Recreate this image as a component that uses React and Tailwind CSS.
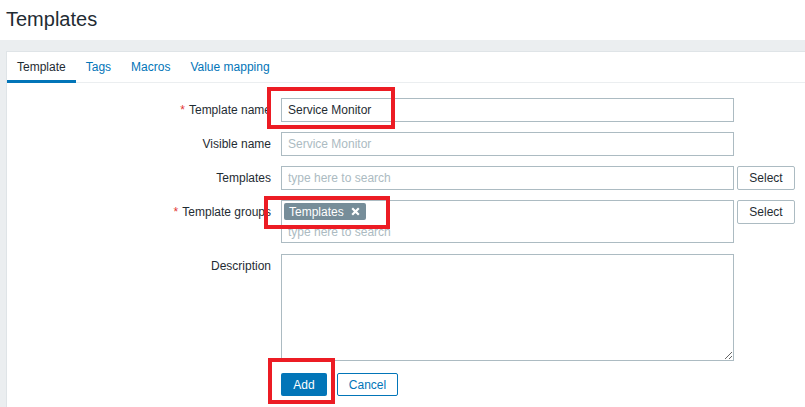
import React from 'react';

const labelCls = "w-[264px] shrink-0 text-right leading-[24px] text-[12px] text-[#1f2c33]";
const inputCls = "w-[453px] h-[24px] border border-[#acbbc2] bg-white px-[6px] text-[12px] text-[#1f2c33] outline-none placeholder:text-[#acbbc2]";

function Req() {
  return <span className="text-[#e33734] mr-[4px]">*</span>;
}

function SelectBtn() {
  return (
    <button className="ml-[3px] w-[58px] h-[24px] border border-[#acbbc2] bg-white rounded-[2px] text-[12px] text-[#1f2c33]">
      Select
    </button>
  );
}

export default function App() {
  return (
    <div className="relative w-[805px] h-[407px] overflow-hidden bg-[#ebeef0] font-['Liberation_Sans',Arial,sans-serif]">
      {/* header */}
      <header className="h-[40px] bg-white px-[6px] flex items-center">
        <h1 className="text-[20px] text-[#1f2c33] leading-none mt-[-3px]">Templates</h1>
      </header>

      <div className="pt-[11px] pl-[6px]">
        <div className="bg-white border-l border-t border-[#dfe4e7] h-[360px]">
          {/* tabs */}
          <div className="flex h-[31px] border-b border-[#ebeef0] text-[12px]">
            <div className="relative px-[10px] leading-[30px] text-[#1f2c33]">
              Template
              <span className="absolute left-0 right-0 bottom-[-1px] h-[3px] bg-[#0275b8]"></span>
            </div>
            <div className="px-[10px] leading-[30px] text-[#0275b8]">Tags</div>
            <div className="px-[10px] leading-[30px] text-[#0275b8]">Macros</div>
            <div className="px-[10px] leading-[30px] text-[#0275b8]">Value mapping</div>
          </div>

          {/* form */}
          <div className="pt-[15px] flex flex-col gap-[10px]">
            <div className="flex">
              <label className={labelCls}><Req />Template name</label>
              <input className={`ml-[10px] ${inputCls}`} defaultValue="Service Monitor" />
            </div>
            <div className="flex">
              <label className={labelCls}>Visible name</label>
              <input className={`ml-[10px] ${inputCls}`} placeholder="Service Monitor" />
            </div>
            <div className="flex">
              <label className={labelCls}>Templates</label>
              <input className={`ml-[10px] ${inputCls}`} placeholder="type here to search" />
              <SelectBtn />
            </div>
            <div className="flex items-start">
              <label className={labelCls}><Req />Template groups</label>
              <div className="ml-[10px] w-[453px] h-[43px] border border-[#acbbc2] bg-white px-[2px] pt-[2px] flex flex-col">
                <span className="self-start flex items-center h-[17px] bg-[#768d99] text-white text-[12px] rounded-[2px] pl-[5px] pr-[6px]">
                  Templates
                  <svg className="ml-[7px]" width="9" height="9" viewBox="0 0 9 9">
                    <path d="M1.2 1.2L7.8 7.8M7.8 1.2L1.2 7.8" stroke="#fff" strokeWidth="2.2" />
                  </svg>
                </span>
                <input className="block w-full h-[18px] mt-[3px] px-[4px] text-[12px] outline-none placeholder:text-[#acbbc2]" placeholder="type here to search" />
              </div>
              <SelectBtn />
            </div>
            <div className="flex mt-[1px]">
              <label className={labelCls}>Description</label>
              <textarea className="ml-[10px] w-[453px] h-[107px] border border-[#acbbc2] bg-white outline-none" />
            </div>
            <div className="flex pl-[274px] pt-[2px] gap-[10px]">
              <button className="w-[46px] h-[23px] bg-[#0275b8] text-white text-[12px] rounded-[2px]">Add</button>
              <button className="w-[61px] h-[23px] border border-[#0275b8] text-[#0275b8] bg-white text-[12px] rounded-[2px]">Cancel</button>
            </div>
          </div>
        </div>
      </div>

      {/* red annotation boxes */}
      <div className="absolute left-[267px] top-[87px] w-[128px] h-[42px] border-[4px] border-[#ec1c24]"></div>
      <div className="absolute left-[264px] top-[196px] w-[126px] h-[33px] border-[4px] border-[#ec1c24]"></div>
      <div className="absolute left-[268px] top-[358px] w-[67px] h-[46px] border-[4px] border-[#ec1c24]"></div>
    </div>
  );
}
